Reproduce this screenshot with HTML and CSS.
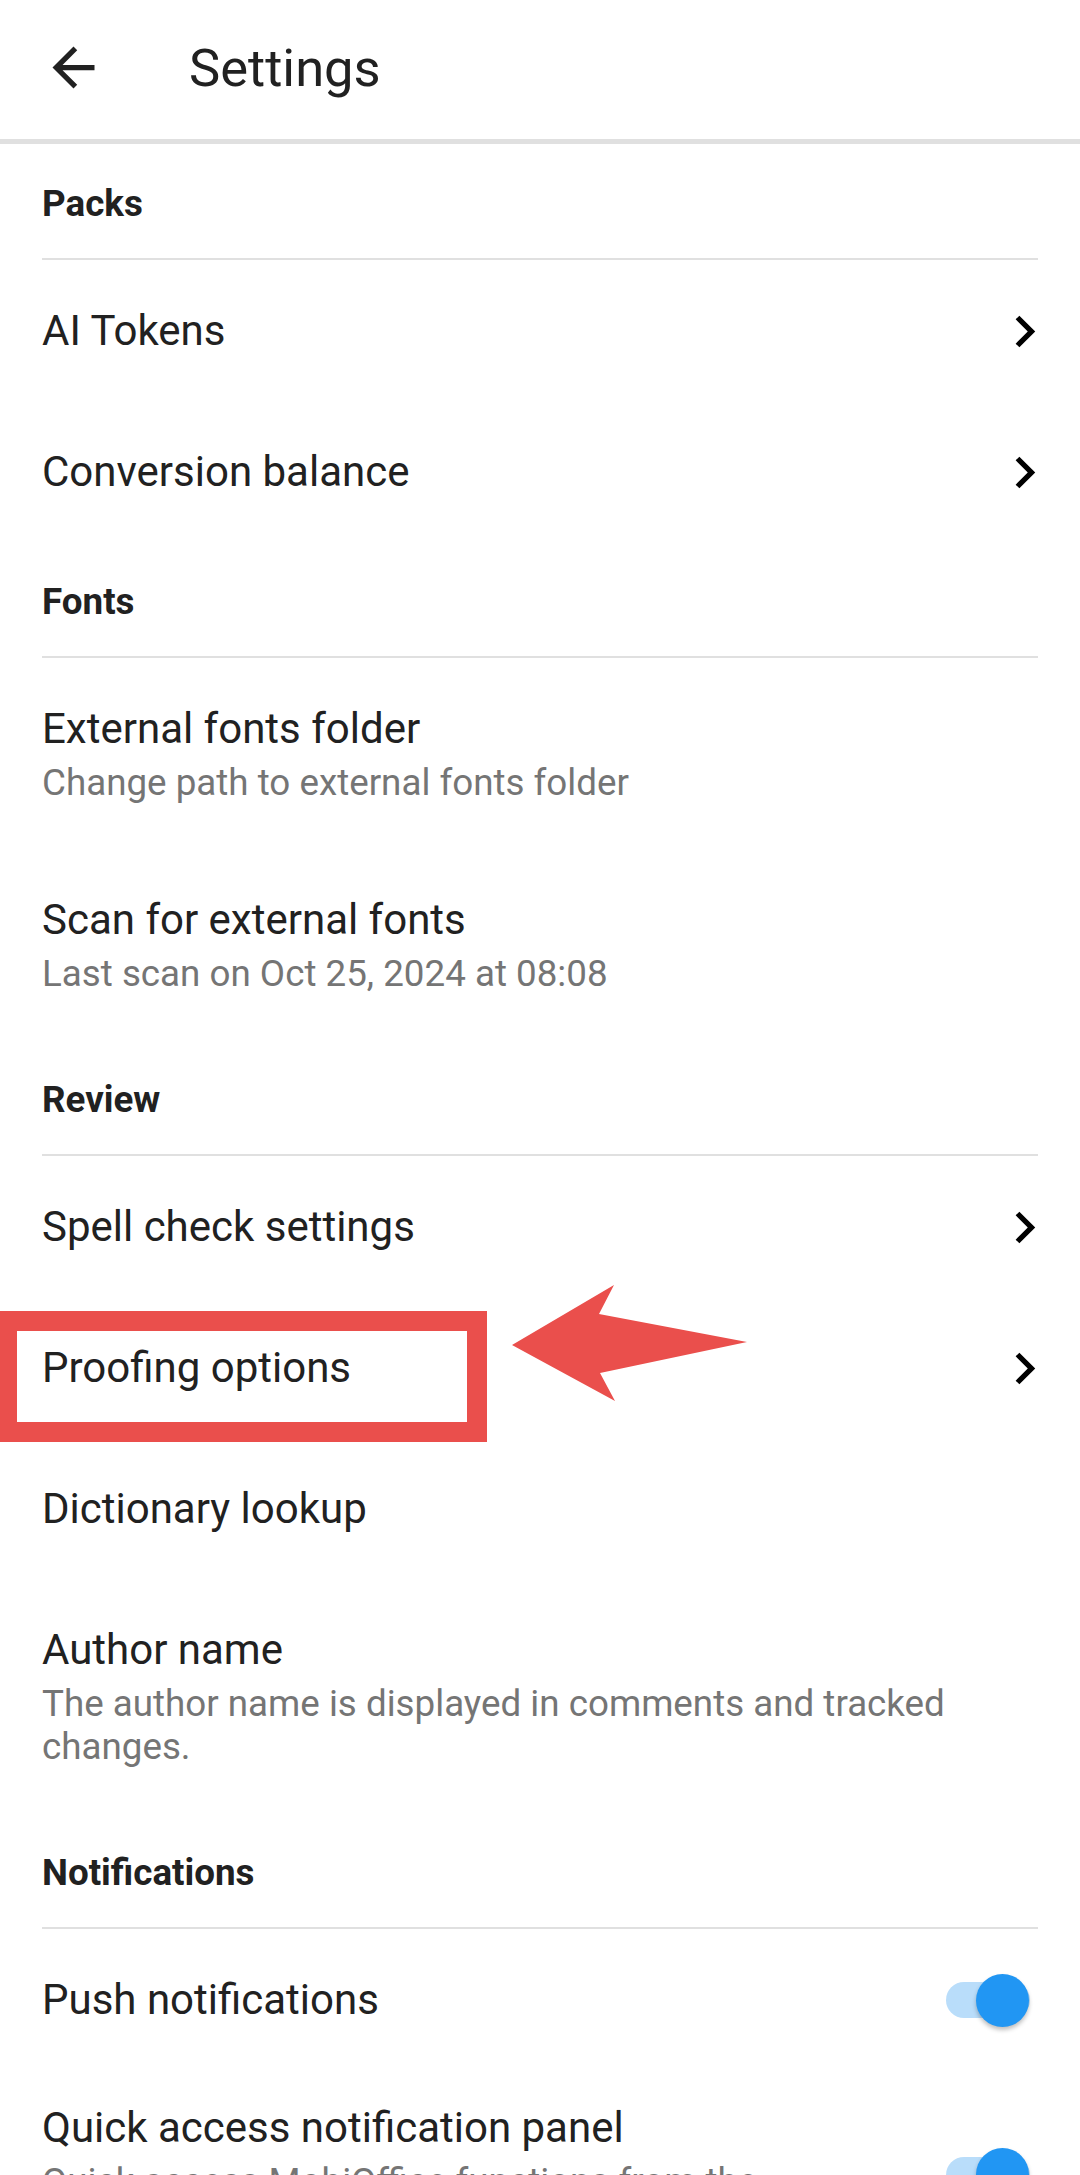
FILE: index.html
```html
<!DOCTYPE html>
<html lang="en">
<head>
  <meta charset="UTF-8" />
  <meta name="viewport" content="width=device-width, initial-scale=1.0"/>
  <title>Settings</title>
  <link rel="stylesheet" href="styles.css">
</head>
<body>
  <div class="toolbar">
    <svg class="back" viewBox="0 0 24 24"><path d="M20 11H7.83l5.59-5.59L12 4l-8 8 8 8 1.41-1.41L7.83 13H20v-2z"/></svg>
    <h1>Settings</h1>
  </div>

  <div class="list">
    <div class="category">Packs</div>
    <div class="row">
      <div class="text"><div class="title">AI Tokens</div></div>
      <svg class="chevron" viewBox="8 5 9 14"><path d="M10 6L8.59 7.41 13.17 12l-4.58 4.59L10 18l6-6z"/></svg>
    </div>
    <div class="row">
      <div class="text"><div class="title">Conversion balance</div></div>
      <svg class="chevron" viewBox="8 5 9 14"><path d="M10 6L8.59 7.41 13.17 12l-4.58 4.59L10 18l6-6z"/></svg>
    </div>

    <div class="category">Fonts</div>
    <div class="row">
      <div class="text">
        <div class="title">External fonts folder</div>
        <div class="summary">Change path to external fonts folder</div>
      </div>
    </div>
    <div class="row">
      <div class="text">
        <div class="title">Scan for external fonts</div>
        <div class="summary">Last scan on Oct 25, 2024 at 08:08</div>
      </div>
    </div>

    <div class="category">Review</div>
    <div class="row">
      <div class="text"><div class="title">Spell check settings</div></div>
      <svg class="chevron" viewBox="8 5 9 14"><path d="M10 6L8.59 7.41 13.17 12l-4.58 4.59L10 18l6-6z"/></svg>
    </div>
    <div class="row highlighted">
      <div class="text"><div class="title">Proofing options</div></div>
      <svg class="chevron" viewBox="8 5 9 14"><path d="M10 6L8.59 7.41 13.17 12l-4.58 4.59L10 18l6-6z"/></svg>
      <div class="mark-box"></div>
      <svg class="mark-arrow" viewBox="0 0 240 120"><polygon points="0,60 102,0 87,29 235,57 88,88 103,116"/></svg>
    </div>
    <div class="row">
      <div class="text"><div class="title">Dictionary lookup</div></div>
    </div>
    <div class="row">
      <div class="text">
        <div class="title">Author name</div>
        <div class="summary">The author name is displayed in comments and tracked changes.</div>
      </div>
    </div>

    <div class="category">Notifications</div>
    <div class="row">
      <div class="text"><div class="title">Push notifications</div></div>
      <div class="switch on"><span class="thumb"></span></div>
    </div>
    <div class="row tight">
      <div class="text">
        <div class="title">Quick access notification panel</div>
        <div class="summary">Quick access MobiOffice functions from the notification bar</div>
      </div>
      <div class="switch on"><span class="thumb"></span></div>
    </div>
  </div>
</body>
</html>
```

FILE: styles.css
```css
body {
  margin: 0;
  font-family: Roboto, "Noto Sans", sans-serif;
  background-color: #fff;
  color: #212121;
  height: 2175px;
  overflow: hidden;
}
.toolbar {
  display: flex;
  align-items: center;
  height: 135px;
  padding: 0 0 4px 42px;
  border-bottom: 5px solid #e0e0e0;
}
.back {
  width: 63px;
  height: 63px;
  fill: #212121;
}
.toolbar h1 {
  margin: 0 0 0 84px;
  font-size: 52.5px;
  font-weight: 400;
}
.category {
  margin: 0 42px;
  padding: 38px 0 32px;
  line-height: 44px;
  font-size: 36.75px;
  font-weight: 700;
  border-bottom: 2px solid #e0e0e0;
}
.row {
  position: relative;
  display: flex;
  align-items: center;
  padding: 46px 42px 45px;
}
.row.tight {
  padding-top: 33px;
}
.text {
  flex: 1;
}
.title {
  font-size: 42px;
  line-height: 50px;
}
.summary {
  margin-top: 7px;
  font-size: 36.75px;
  line-height: 43px;
  color: #757575;
}
.chevron {
  width: 24px;
  height: 37px;
  fill: #000;
}
.switch {
  position: relative;
  flex: none;
  width: 84px;
  height: 36px;
  margin: 0 8px 0 40px;
  border-radius: 18px;
  background: #b9ddfa;
}
.thumb {
  position: absolute;
  left: 30px;
  top: -8.5px;
  width: 53px;
  height: 53px;
  border-radius: 50%;
  background: #2196f3;
  box-shadow: 0 3px 4px rgba(0, 0, 0, 0.25);
}
.mark-box {
  position: absolute;
  left: 0;
  top: 14px;
  width: 450px;
  height: 91px;
  border: 20px solid #ea4f4c;
  border-left-width: 17px;
  z-index: -1;
}
.mark-arrow {
  position: absolute;
  left: 512px;
  top: -12px;
  width: 240px;
  height: 120px;
  fill: #ea4f4c;
}
```
